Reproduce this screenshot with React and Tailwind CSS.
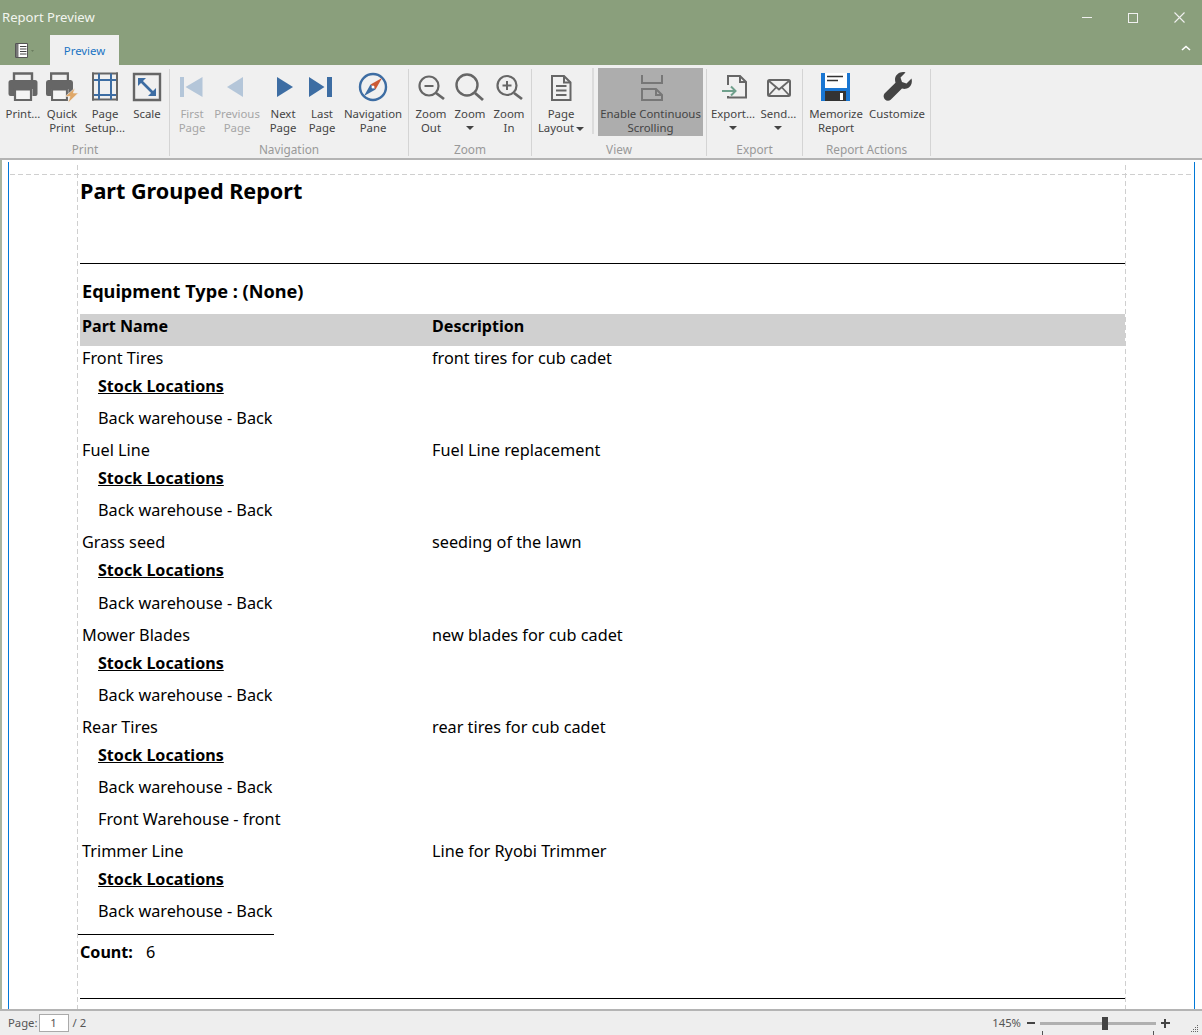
const UI = { fontFamily: '"Noto Sans", sans-serif' };

const I = ({ children }) => (
  <svg width="36" height="36" viewBox="0 0 36 36" className="block" fill="none">{children}</svg>
);

const Printer = () => (
  <>
    <path d="M9 11V4.500h18V11" stroke="#666" strokeWidth="2.400" />
    <path d="M6 11h24a2.500 2.500 0 0 1 2.500 2.500V25a2 2 0 0 1-2 2h-3v-7H9v7H5.500a2 2 0 0 1-2-2V13.500A2.500 2.500 0 0 1 6 11z" fill="#666" />
    <path d="M10 20.500h16V31H10z" fill="#f4f4f4" stroke="#666" strokeWidth="2.200" />
  </>
);

const icons = {
  print: <I><Printer /></I>,
  quick: (
    <I>
      <g transform="translate(-1.250 0) scale(0.93 1)"><Printer /></g>
      <path d="M31 19L21 27.500h5L24 34l10.300-10H29.300z" fill="#e0a868" stroke="#f0f0f0" strokeWidth="0.600" />
    </I>
  ),
  setup: (
    <I>
      <path d="M6 4.500h24v26H6z" stroke="#666" strokeWidth="2" />
      <path d="M12 4.500v26M24 4.500v26M6 11h24M6 26h24" stroke="#3d6da3" strokeWidth="2" />
      <path d="M6 3.500v28M30 3.500v28" stroke="#666" strokeWidth="2" />
    </I>
  ),
  scale: (
    <I>
      <path d="M5 5h26v26H5z" stroke="#666" strokeWidth="2.400" />
      <path d="M11 11l14 14" stroke="#3d6da3" strokeWidth="2.600" />
      <path d="M9 9h8l-8 8zM27 27h-8l8-8z" fill="#3d6da3" />
    </I>
  ),
  first: <I><path d="M6 8h4v20H6zM28.500 8v20l-17-10z" fill="#b4c6d9" /></I>,
  prev: <I><path d="M24 8v20L8 18z" fill="#b4c6d9" /></I>,
  next: <I><path d="M12 8v20l16-10z" fill="#3d6da3" /></I>,
  last: <I><path d="M5 8v20l15.500-10zM23 8h5v20h-5z" fill="#3d6da3" /></I>,
  nav: (
    <I>
      <circle cx="18" cy="18" r="13" stroke="#3d6da3" strokeWidth="2.400" />
      <path d="M27 9l-6.500 11.500-5-5z" fill="#cc5a34" />
      <path d="M9 27l6.500-11.500 5 5z" fill="#3d6da3" />
      <circle cx="18" cy="18" r="1.500" fill="#fff" />
    </I>
  ),
  zoomOut: (
    <I>
      <circle cx="16" cy="17" r="9.500" stroke="#666" strokeWidth="2.200" />
      <path d="M23 24l8 6" stroke="#666" strokeWidth="2.800" />
      <path d="M11.500 17h9" stroke="#666" strokeWidth="2" />
    </I>
  ),
  zoom: (
    <I>
      <circle cx="15" cy="16" r="10.500" stroke="#666" strokeWidth="2.400" />
      <path d="M23 24l8 7" stroke="#666" strokeWidth="2.800" />
    </I>
  ),
  zoomIn: (
    <I>
      <circle cx="16" cy="16.500" r="9.500" stroke="#666" strokeWidth="2.200" />
      <path d="M23 24l8 6" stroke="#666" strokeWidth="2.800" />
      <path d="M11.500 16.500h9M16 12v9" stroke="#666" strokeWidth="2" />
    </I>
  ),
  layout: (
    <I>
      <path d="M9 7h12l6.500 6.500V31H9z" stroke="#666" strokeWidth="2" />
      <path d="M21 7v6.500h6.500" stroke="#666" strokeWidth="2" />
      <path d="M13 17h10.500M13 21.500h10.500M13 26h10.500" stroke="#666" strokeWidth="2" />
    </I>
  ),
  enable: (
    <I>
      <path d="M9 6v8h20V6" stroke="#777" strokeWidth="2" />
      <path d="M9 32V20h14l6 6v6M8 31h22" stroke="#777" strokeWidth="2" />
      <path d="M23 20v6h6" stroke="#777" strokeWidth="2" />
    </I>
  ),
  exportIcon: (
    <I>
      <path d="M13 16V7h12l6 6v15.500H13V27" stroke="#666" strokeWidth="2" />
      <path d="M25 7v6h6" stroke="#666" strokeWidth="2" />
      <path d="M7 22h13" stroke="#6fa08c" strokeWidth="2" />
      <path d="M16 17.500l4.500 4.500-4.500 4.500" stroke="#6fa08c" strokeWidth="2" />
    </I>
  ),
  send: (
    <I>
      <rect x="7" y="11" width="22" height="16" rx="1.500" stroke="#666" strokeWidth="2" />
      <path d="M8 12l10 8.500L28 12M8 26l7.500-8M28 26l-7.500-8" stroke="#666" strokeWidth="1.800" />
    </I>
  ),
  memorize: (
    <I>
      <path d="M3 4h29v28H3z" fill="#1976d2" />
      <path d="M7 4h22v15H7z" fill="#fff" />
      <path d="M9 7.500h16M9 11.500h11" stroke="#333" strokeWidth="1.600" />
      <path d="M7 22h21v10H7z" fill="#333" />
      <path d="M22 24h3v7h-3z" fill="#fff" />
    </I>
  ),
  wrench: (
    <I>
      <path d="M32.500 9.500l-5 5-4.500-1.500-1.500-4.500 5-5c-4.500-1.500-10 1.500-10.500 6.500 0 1.500.200 2.800.500 3.800L5.500 24.500c-1.500 2-1 4.500.5 6s4 1.600 5.700.200L23 19.500c1.300.4 2.500.5 3.800.3 5-.7 7-6 5.700-10.300z" fill="#444" />
    </I>
  ),
};

const Caret = () => (
  <span className="inline-block border-x-[4px] border-t-[4px] border-x-transparent border-t-[#444]" />
);

const Btn = ({ w, icon, l1, l2, disabled, caret, active }) => (
  <div className={`flex flex-col items-center h-[68px] ${w} ${active ? 'bg-[#adadad]' : ''}`}>
    <div className="h-[36px] mt-[1px] flex justify-center">{icon}</div>
    <div className={`mt-[2px] text-[11.4px] leading-[14px] text-center whitespace-nowrap ${disabled ? 'text-[#a6a6a6]' : 'text-[#444]'}`}>
      <div>{l1}</div>
      {l2 && <div>{l2}{caret === 'inline' && <span className="ml-[2px] align-middle inline-flex"><Caret /></span>}</div>}
      {caret === 'below' && <div className="h-[14px] flex items-center justify-center"><Caret /></div>}
    </div>
  </div>
);

const Group = ({ w, pl, label, children }) => (
  <div className={`flex flex-col h-[87px] mt-[4px] shrink-0 border-r border-[#d4d4d4] ${w}`}>
    <div className={`flex h-[68px] -mt-[1px] ${pl}`}>{children}</div>
    <div className="text-[11.8px] leading-[16px] text-[#999] text-center mt-[5px]">{label}</div>
  </div>
);

const Part = ({ name, desc, locs, tall }) => (
  <div className="leading-[24px]">
    <div className="h-[28px] flex pl-[2px]">
      <div className="w-[350px]">{name}</div>
      <div>{desc}</div>
    </div>
    <div className={`${tall ? 'h-[33px]' : 'h-[32px]'} pl-[18px] font-bold text-[16.1px] underline`}>Stock Locations</div>
    {locs.map((l) => (
      <div key={l} className="h-[32px] pl-[18px]">{l}</div>
    ))}
  </div>
);

const parts = [
  ['Front Tires', 'front tires for cub cadet', ['Back warehouse - Back']],
  ['Fuel Line', 'Fuel Line replacement', ['Back warehouse - Back']],
  ['Grass seed', 'seeding of the lawn', ['Back warehouse - Back'], true],
  ['Mower Blades', 'new blades for cub cadet', ['Back warehouse - Back']],
  ['Rear Tires', 'rear tires for cub cadet', ['Back warehouse - Back', 'Front Warehouse - front']],
  ['Trimmer Line', 'Line for Ryobi Trimmer', ['Back warehouse - Back']],
];

export default function App() {
  return (
    <div className="w-[1202px] h-[1035px] flex flex-col overflow-hidden bg-white" style={UI}>
      {/* title bar */}
      <div className="h-[35px] shrink-0 bg-[#8a9f7c] flex items-center justify-between pl-[2px]">
        <span className="text-[13.1px] text-[#f2f5ef]">Report Preview</span>
        <div className="flex h-full">
          <div className="w-[46px] flex items-center justify-center"><div className="w-[10px] h-px bg-[#f0f0f0]" /></div>
          <div className="w-[46px] flex items-center justify-center"><div className="w-[10px] h-[10px] border border-[#f0f0f0]" /></div>
          <div className="w-[46px] flex items-center justify-center">
            <svg width="11" height="11" viewBox="0 0 11 11"><path d="M.5.500l10 10M10.500.500l-10 10" stroke="#f0f0f0" strokeWidth="1.100" /></svg>
          </div>
        </div>
      </div>
      {/* tab strip */}
      <div className="h-[30px] shrink-0 bg-[#8a9f7c] flex items-end pl-[15px] pr-[11px]">
        <div className="w-[35px] h-[22px] self-start mt-[8px] flex">
          <svg width="20" height="15" viewBox="0 0 20 15" fill="none">
            <path d="M.5.500h12v14H.5z" fill="#fff" stroke="#555" />
            <path d="M1 1h2.500v13H1z" fill="#777" />
            <path d="M5 3.500h6.500M5 6h6.500M5 8.500h6.500M5 11h6.500" stroke="#444" />
            <path d="M16 7h3l-1.500 2z" fill="#6b7d5f" />
          </svg>
        </div>
        <div className="w-[69px] h-[30px] bg-[#f0f0f0] flex items-center justify-center text-[11.4px] text-[#1a74c4] pt-[1px]">Preview</div>
        <svg className="ml-auto self-center mb-[4px]" width="10" height="6" viewBox="0 0 10 6" fill="none">
          <path d="M1 5l4-3.500L9 5" stroke="#fff" strokeWidth="1.600" />
        </svg>
      </div>
      {/* ribbon */}
      <div className="h-[95px] shrink-0 bg-[#f0f0f0] border-b-2 border-[#b4b4b4] flex pl-[1px]">
        <Group w="w-[169px]" pl="pl-[3px]" label="Print">
          <Btn w="w-[38px]" icon={icons.print} l1="Print..." />
          <Btn w="w-[40px]" icon={icons.quick} l1="Quick" l2="Print" />
          <Btn w="w-[46px]" icon={icons.setup} l1="Page" l2="Setup..." />
          <Btn w="w-[38px]" icon={icons.scale} l1="Scale" />
        </Group>
        <Group w="w-[239px]" pl="pl-[2px]" label="Navigation">
          <Btn w="w-[40px]" icon={icons.first} l1="First" l2="Page" disabled />
          <Btn w="w-[50px]" icon={icons.prev} l1="Previous" l2="Page" disabled />
          <Btn w="w-[42px]" icon={icons.next} l1="Next" l2="Page" />
          <Btn w="w-[36px]" icon={icons.last} l1="Last" l2="Page" />
          <Btn w="w-[66px]" icon={icons.nav} l1="Navigation" l2="Pane" />
        </Group>
        <Group w="w-[123px]" pl="pl-[2px]" label="Zoom">
          <Btn w="w-[40px]" icon={icons.zoomOut} l1="Zoom" l2="Out" />
          <Btn w="w-[38px]" icon={icons.zoom} l1="Zoom" caret="below" />
          <Btn w="w-[40px]" icon={icons.zoomIn} l1="Zoom" l2="In" />
        </Group>
        <Group w="w-[175px]" pl="pl-0" label="View">
          <Btn w="w-[58px]" icon={icons.layout} l1="Page" l2="Layout" caret="inline" />
          <div className="w-[2px] h-[66px] bg-[#dcdcdc] ml-[2px] mr-[4px]" />
          <Btn w="w-[105px]" icon={icons.enable} l1="Enable Continuous" l2="Scrolling" active />
        </Group>
        <Group w="w-[96px]" pl="pl-[4px]" label="Export">
          <Btn w="w-[44px]" icon={icons.exportIcon} l1="Export..." caret="below" />
          <Btn w="w-[48px]" icon={icons.send} l1="Send..." caret="below" />
        </Group>
        <Group w="w-[128px]" pl="pl-[4px]" label="Report Actions">
          <Btn w="w-[58px]" icon={icons.memorize} l1="Memorize" l2="Report" />
          <Btn w="w-[64px]" icon={icons.wrench} l1="Customize" />
        </Group>
      </div>
      {/* preview */}
      <div className="relative flex-1 min-h-0 border-l-2 border-[#a9b5a0] bg-white pl-[78px] text-black">
        <div className="absolute left-[6px] top-[2px] bottom-0 w-px bg-[#0078d7]" />
        <div className="absolute left-[1192px] top-[2px] bottom-0 w-px bg-[#0078d7]" />
        <div className="absolute left-[8px] right-[8px] top-[14px] h-px bg-[repeating-linear-gradient(90deg,#cfcfcf_0_5px,transparent_5px_8px)]" />
        <div className="absolute left-[75px] top-[5px] bottom-0 w-px bg-[repeating-linear-gradient(180deg,#cfcfcf_0_5px,transparent_5px_8px)]" />
        <div className="absolute left-[1123px] top-[5px] bottom-0 w-px bg-[repeating-linear-gradient(180deg,#cfcfcf_0_5px,transparent_5px_8px)]" />

        <div className="w-[1045px] text-[16.25px] leading-[22px]">
          <h1 className="text-[21.6px] leading-[30px] font-bold mt-[16px] mb-[57px]">Part Grouped Report</h1>
          <div className="border-t border-black pl-[2px] pt-[16px] h-[51px] font-bold text-[18.15px]">Equipment Type : (None)</div>
          <div className="h-[32px] bg-[#d0d0d0] flex pl-[2px] font-bold text-[16.1px] leading-[24px]">
            <div className="w-[350px]">Part Name</div>
            <div>Description</div>
          </div>
          {parts.map(([n, d, l, t]) => <Part key={n} name={n} desc={d} locs={l} tall={t} />)}
          <div className="-ml-[3px] w-[197px] border-t border-black mt-[3px]" />
          <div className="flex pt-[6px] h-[63px]">
            <span className="font-bold text-[16.1px] w-[66px]">Count:</span>
            <span>6</span>
          </div>
          <div className="border-t border-black" />
        </div>
      </div>
      {/* status bar */}
      <div className="h-[26px] shrink-0 bg-[#eeeeee] border-t-2 border-[#b4b4b4] flex items-center pl-[8px] pr-[3px] text-[11.3px] text-[#555]">
        <span className="pt-[1px]">Page:</span>
        <div className="w-[30px] h-[18px] ml-[1px] bg-white border border-[#aaa] flex items-center justify-center">1</div>
        <span className="ml-[4px] pt-[1px]">/ 2</span>
        <span className="ml-auto mr-[6px] pt-[1px]">145%</span>
        <div className="w-[8px] h-[2px] bg-[#444] mr-[5px]" />
        <div className="relative w-[116px] h-[3px] bg-[#b0b0b0]">
          <div className="absolute left-[62px] -top-[5px] w-[6px] h-[13px] bg-[#444]" />
          <div className="absolute left-[2px] top-[9px] w-px h-[4px] bg-[#555]" />
          <div className="absolute left-[113px] top-[9px] w-px h-[4px] bg-[#555]" />
        </div>
        <div className="relative w-[9px] h-[9px] ml-[5px]">
          <div className="absolute left-0 top-[3px] w-[9px] h-[2px] bg-[#444]" />
          <div className="absolute left-[3px] top-0 w-[2px] h-[9px] bg-[#444]" />
        </div>
        <svg className="ml-[21px] self-end mb-[2px]" width="8" height="8" viewBox="0 0 8 8">
          <path d="M6 0h1v1H6zM4 2h1v1H4zM6 2h1v1H6zM2 4h1v1H2zM4 4h1v1H4zM6 4h1v1H6zM0 6h1v1H0zM2 6h1v1H2zM4 6h1v1H4zM6 6h1v1H6z" fill="#666" />
        </svg>
      </div>
    </div>
  );
}
